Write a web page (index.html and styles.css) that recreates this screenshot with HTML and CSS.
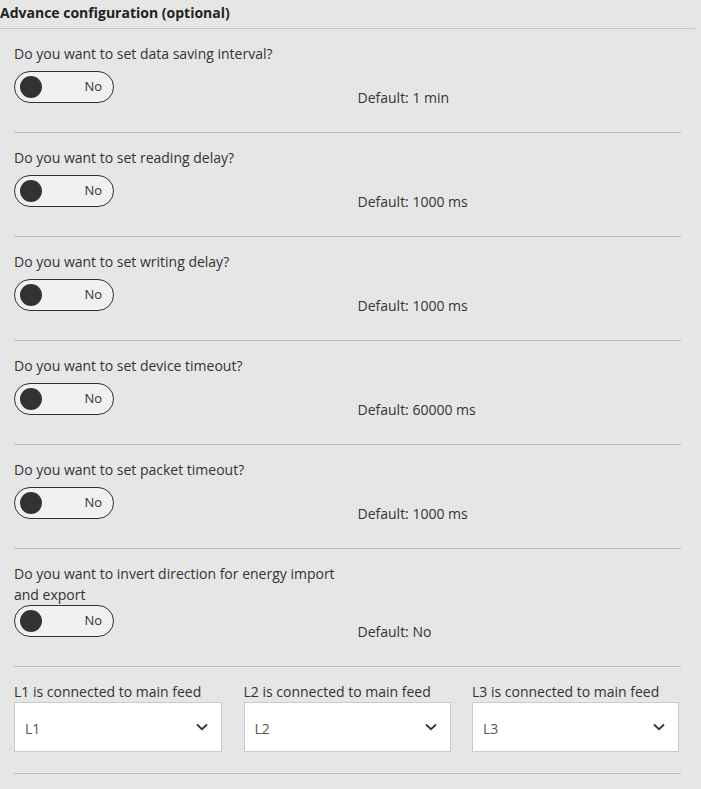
FILE: index.html
```html
<!DOCTYPE html>
<html>
<head>
<meta charset="utf-8">
<link rel="stylesheet" href="styles.css">
</head>
<body>
<div class="page">
  <div class="header">Advance configuration (optional)</div>
  <div class="content">
    <div class="row">
      <div class="left">
        <div class="label">Do you want to set data saving interval?</div>
        <div class="toggle"><span class="knob"></span><span class="tval">No</span></div>
      </div>
      <div class="default">Default: 1 min</div>
    </div>
    <div class="row">
      <div class="left">
        <div class="label">Do you want to set reading delay?</div>
        <div class="toggle"><span class="knob"></span><span class="tval">No</span></div>
      </div>
      <div class="default">Default: 1000 ms</div>
    </div>
    <div class="row">
      <div class="left">
        <div class="label">Do you want to set writing delay?</div>
        <div class="toggle"><span class="knob"></span><span class="tval">No</span></div>
      </div>
      <div class="default">Default: 1000 ms</div>
    </div>
    <div class="row">
      <div class="left">
        <div class="label">Do you want to set device timeout?</div>
        <div class="toggle"><span class="knob"></span><span class="tval">No</span></div>
      </div>
      <div class="default">Default: 60000 ms</div>
    </div>
    <div class="row">
      <div class="left">
        <div class="label">Do you want to set packet timeout?</div>
        <div class="toggle"><span class="knob"></span><span class="tval">No</span></div>
      </div>
      <div class="default">Default: 1000 ms</div>
    </div>
    <div class="row">
      <div class="left">
        <div class="label">Do you want to invert direction for energy import and export</div>
        <div class="toggle"><span class="knob"></span><span class="tval">No</span></div>
      </div>
      <div class="default">Default: No</div>
    </div>
    <div class="selects">
      <div class="field">
        <div class="flabel">L1 is connected to main feed</div>
        <div class="select"><span class="sval">L1</span>
          <svg class="chev" width="12" height="8" viewBox="0 0 12 8"><path d="M1 1.5 L6 6.2 L11 1.5" fill="none" stroke="#333" stroke-width="1.8"/></svg>
        </div>
      </div>
      <div class="field">
        <div class="flabel">L2 is connected to main feed</div>
        <div class="select"><span class="sval">L2</span>
          <svg class="chev" width="12" height="8" viewBox="0 0 12 8"><path d="M1 1.5 L6 6.2 L11 1.5" fill="none" stroke="#333" stroke-width="1.8"/></svg>
        </div>
      </div>
      <div class="field">
        <div class="flabel">L3 is connected to main feed</div>
        <div class="select"><span class="sval">L3</span>
          <svg class="chev" width="12" height="8" viewBox="0 0 12 8"><path d="M1 1.5 L6 6.2 L11 1.5" fill="none" stroke="#333" stroke-width="1.8"/></svg>
        </div>
      </div>
    </div>
  </div>
</div>
</body>
</html>
```
FILE: styles.css
```css
html, body {
  margin: 0;
  padding: 0;
  background: #e6e6e6;
}
body {
  font-family: "Open Sans", "Liberation Sans", sans-serif;
  font-size: 14px;
  line-height: 21px;
  color: #333;
}
.page {
  width: 701px;
}
.header {
  width: 695px;
  font-weight: 700;
  color: #222;
  padding-top: 2px;
  height: 26px;
  border-bottom: 1px solid #c4c4c4;
}
.content {
  margin-left: 14px;
  width: 667px;
}
.row {
  display: grid;
  grid-template-columns: 1fr 1fr;
  padding: 14px 0 24px 0;
  border-bottom: 1px solid #bdbdbd;
}
.left {
  display: flex;
  flex-direction: column;
}
.label {
  min-height: 28px;
}
.toggle {
  box-sizing: border-box;
  width: 100px;
  height: 32px;
  border: 1px solid #333;
  border-radius: 16px;
  background: #f1f1f1;
  display: flex;
  align-items: center;
  justify-content: space-between;
  padding: 0 11px 0 5px;
  margin-bottom: 5px;
}
.knob {
  width: 22px;
  height: 22px;
  border-radius: 50%;
  background: #333;
}
.tval {
  font-size: 13px;
  color: #333;
  padding-bottom: 2px;
}
.default {
  align-self: end;
  padding-left: 10px;
}
.selects {
  display: grid;
  grid-template-columns: 208px 207px 207px;
  column-gap: 21.5px;
  padding: 14px 0 21px 0;
  border-bottom: 1px solid #bdbdbd;
}
.flabel {
  height: 21px;
}
.select {
  box-sizing: border-box;
  height: 50px;
  background: #fff;
  border: 1px solid #cbcbcb;
  display: flex;
  align-items: center;
  justify-content: space-between;
  padding: 0 13px 0 10px;
}
.sval {
  color: #555;
  padding-top: 2px;
}
.chev {
  display: block;
}
```
